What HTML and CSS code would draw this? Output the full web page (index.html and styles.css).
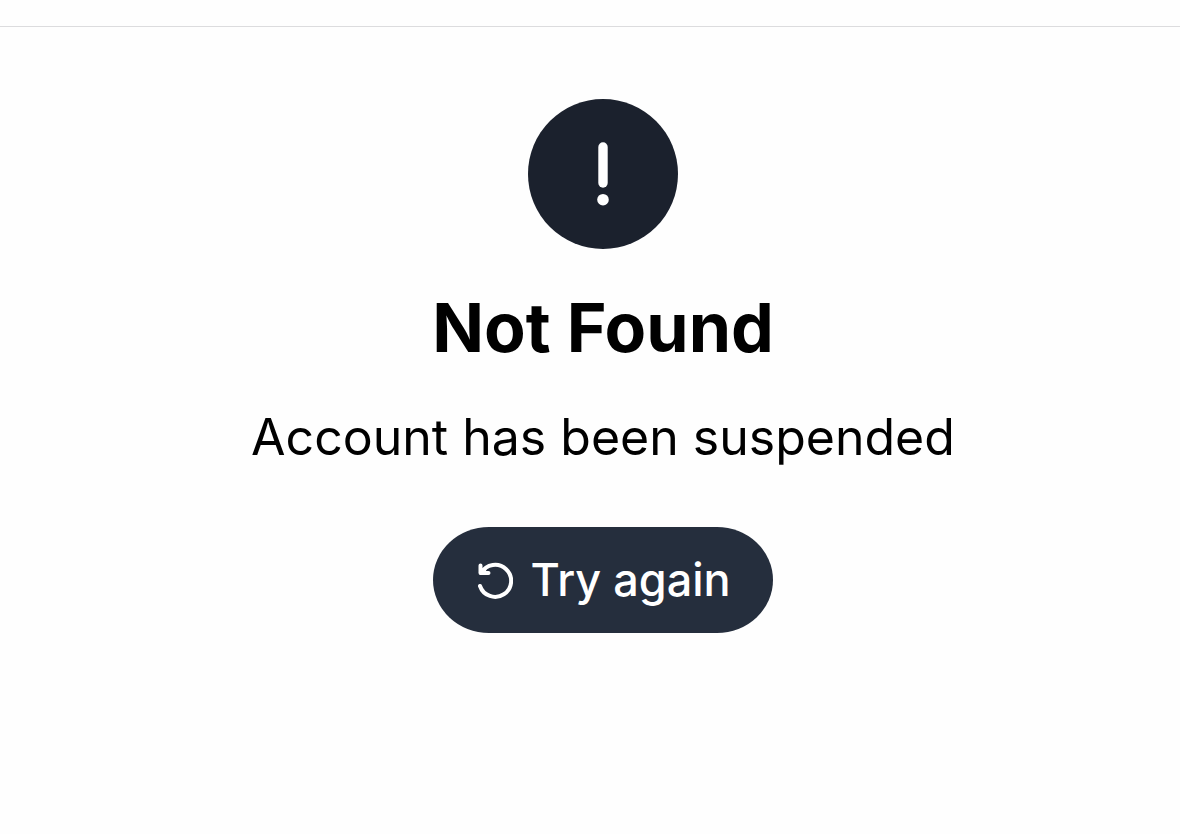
FILE: index.html
```html
<!DOCTYPE html>
<html lang="en">
<head>
<meta charset="utf-8">
<meta name="viewport" content="width=device-width, initial-scale=1">
<title>Not Found</title>
<link rel="stylesheet" href="styles.css">
</head>
<body>
<header class="topbar"></header>
<main class="error">
  <svg class="error-icon" viewBox="0 0 150 150" aria-hidden="true">
    <circle cx="75" cy="75" r="75" fill="#1b212d"/>
    <path d="M75 48V84" stroke="#fff" stroke-width="9.4" stroke-linecap="round"/>
    <circle cx="75" cy="100.7" r="5.8" fill="#fff"/>
  </svg>
  <h1 class="error-title">Not Found</h1>
  <p class="error-text">Account has been suspended</p>
  <button class="retry" type="button">
    <svg class="retry-icon" viewBox="0 0 38 38" fill="none" stroke="#fff" stroke-width="4" stroke-linecap="round" stroke-linejoin="round" aria-hidden="true">
      <path d="M5 25A16 16 0 1 0 6.200 12"/>
      <path d="M5.500 4.500V12H13.500M5.500 12L9.500 8.500"/>
    </svg>
    <span>Try again</span>
  </button>
</main>
</body>
</html>
```
FILE: styles.css
```css
* {
  box-sizing: border-box;
}

body {
  margin: 0;
  background: #fefefe;
  color: #000;
  font-family: Inter, "Liberation Sans", sans-serif;
}

.topbar {
  height: 27px;
  border-bottom: 1px solid #dcdcde;
}

.error {
  display: flex;
  flex-direction: column;
  align-items: center;
  padding: 72px 0 72px 26px;
}

.error-icon {
  width: 150px;
  height: 150px;
}

.error-title {
  margin: 36px 0 0;
  font-size: 68px;
  line-height: 84px;
  font-weight: 700;
}

.error-text {
  margin: 32px 0 0;
  font-size: 50px;
  line-height: 72px;
}

.retry {
  display: flex;
  align-items: center;
  gap: 17px;
  height: 106px;
  margin-top: 54px;
  padding: 0 42px;
  border: 0;
  border-radius: 56px / 53px;
  background: #252e3d;
  color: #fff;
  font: 500 45px/56px Inter, "Liberation Sans", sans-serif;
}

.retry-icon {
  width: 38px;
  height: 38px;
}
```
